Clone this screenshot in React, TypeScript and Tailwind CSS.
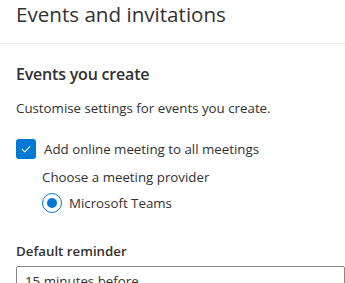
import React from "react";

export default function App() {
  return (
    <div
      className="w-[345px] h-[283px] overflow-hidden bg-white text-[#323130]"
      style={{ fontFamily: '"Open Sans", "Noto Sans", sans-serif' }}
    >
      <div className="h-[43px] border-b border-[#edebe9] box-content pl-4">
        <div className="text-[20.6px] leading-[28px]">Events and invitations</div>
      </div>
      <div className="pl-4">
        <div className="mt-[19px] text-[16px] leading-[22px] font-semibold tracking-[-0.2px]">Events you create</div>
        <div className="mt-[13px] text-[13.3px] leading-[20px]">Customise settings for events you create.</div>
        <div className="mt-[21px] flex items-center gap-[8px] h-[20px]">
          <div className="w-[20px] h-[20px] rounded-[3px] bg-[#0078d4] flex items-center justify-center">
            <svg width="12" height="12" viewBox="0 0 12 12" fill="none">
              <path d="M2.2 6.3 L4.8 8.8 L9.8 3.6" stroke="white" strokeWidth="1.1" strokeLinecap="round" strokeLinejoin="round" />
            </svg>
          </div>
          <span className="text-[13.3px] leading-[20px]">Add online meeting to all meetings</span>
        </div>
        <div className="pl-[26px]">
          <div className="mt-[8px] text-[13.3px] leading-[20px]">Choose a meeting provider</div>
          <div className="mt-[6px] flex items-center gap-[7px] h-[20px]">
            <div className="w-[20px] h-[20px] rounded-full border border-[#0078d4] flex items-center justify-center">
              <div className="w-[10px] h-[10px] rounded-full bg-[#0078d4]" />
            </div>
            <span className="text-[13.3px] leading-[20px]">Microsoft Teams</span>
          </div>
        </div>
        <div className="mt-[28px] text-[13.3px] leading-[20px] font-semibold">Default reminder</div>
        <div className="mt-[5px] h-[32px] border border-[#8a8886] rounded-[2px] px-[8px] flex items-center text-[13.3px]">
          15 minutes before
        </div>
      </div>
    </div>
  );
}
